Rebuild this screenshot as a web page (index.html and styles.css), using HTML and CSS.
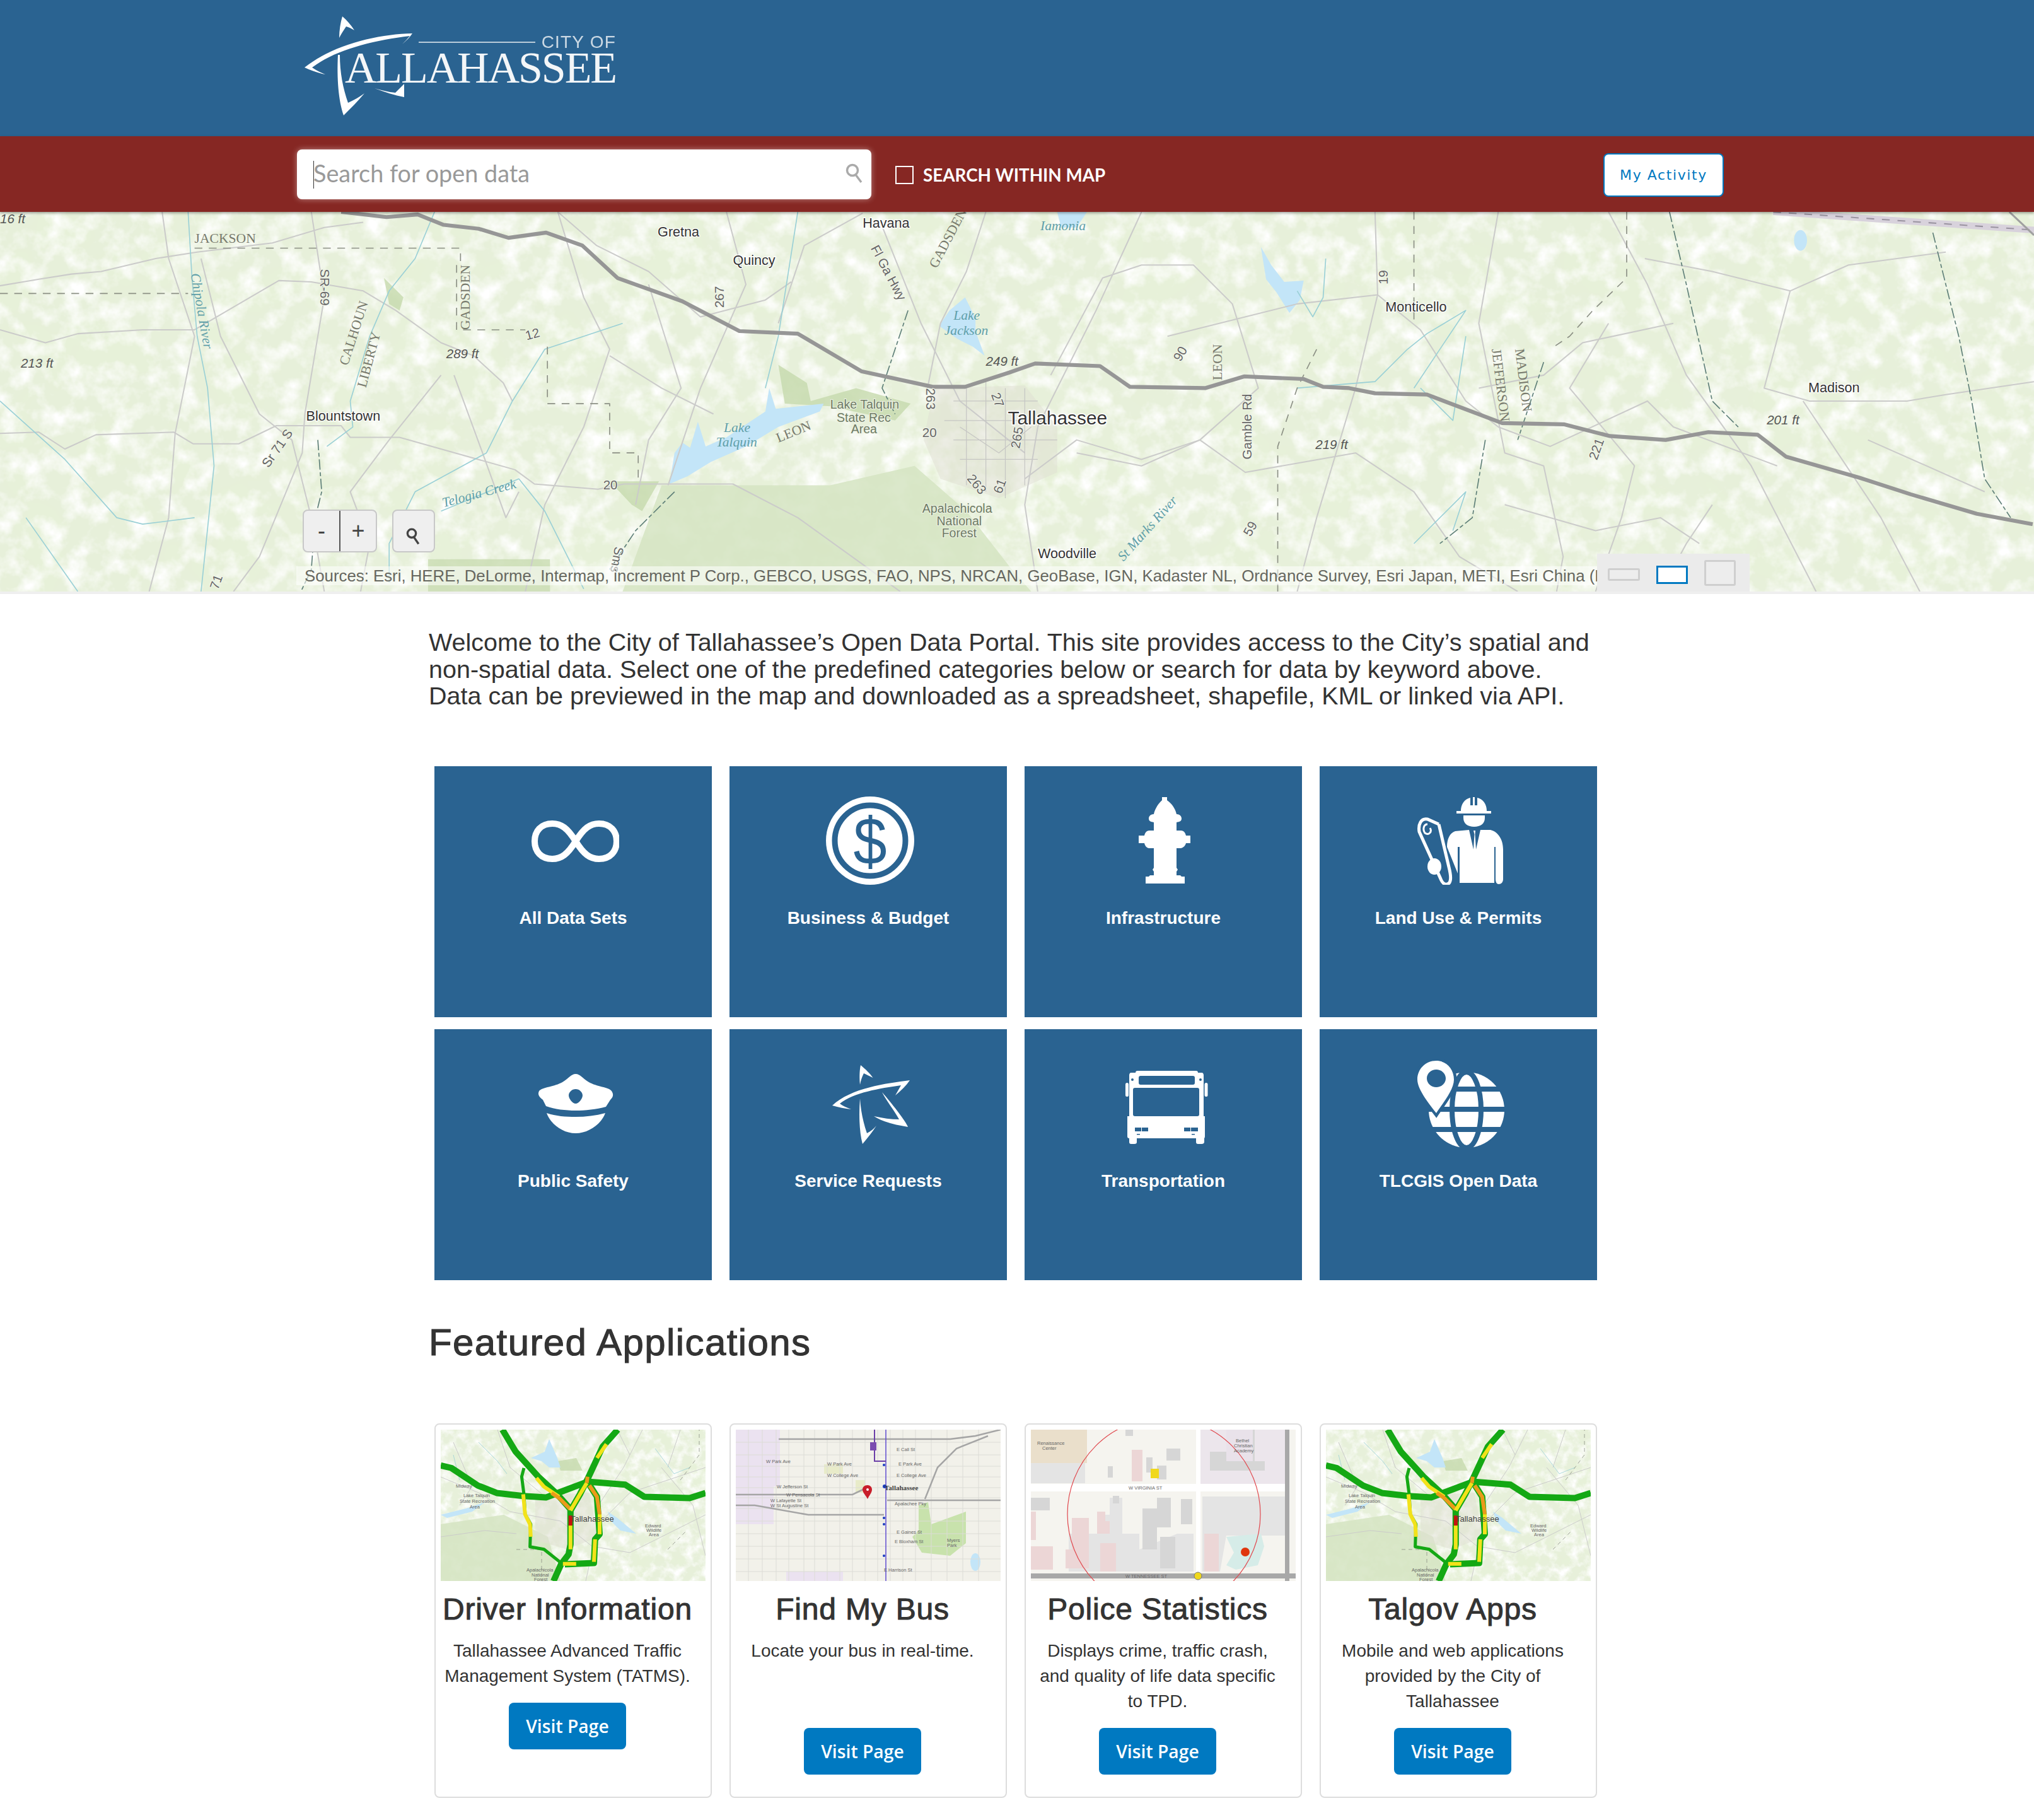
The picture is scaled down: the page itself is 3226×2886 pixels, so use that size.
FILE: index.html
```html
<!DOCTYPE html>
<html>
  <head>
    <title>City of Tallahassee Open Data Portal</title>
    <link rel="stylesheet" href="styles.css">
  </head>
  <body>
    <svg class="svg-defs" width="0" height="0">
      <defs>
        <filter id="blotchWhite" x="0" y="0" width="100%" height="100%">
          <feTurbulence type="fractalNoise" baseFrequency="0.06" numOctaves="4" seed="7"/>
          <feColorMatrix values="0 0 0 0 1  0 0 0 0 1  0 0 0 0 1  2.500 0 0 0 -1.050"/>
        </filter>
        <filter id="blotchGreen" x="0" y="0" width="100%" height="100%">
          <feTurbulence type="fractalNoise" baseFrequency="0.02" numOctaves="3" seed="21"/>
          <feColorMatrix values="0 0 0 0 0.8  0 0 0 0 0.88  0 0 0 0 0.69  0 2.6 0 0 -1.05"/>
        </filter>
        <symbol id="star" viewBox="0 0 140 140">
          <path d="M55,9C62,15 70,22 74.5,29C69,26 64,24 60,22C57,28 55,34 54,40C53,30 53,18 55,9Z"/>
          <path d="M133,33C95,38 40,45 10,73C20,76 30,78 40,79C33,76 27,74 22,70C45,52 85,46 119,41C116,46 113,52 110,57C119,49 127,42 133,33Z"/>
          <path d="M54,62C52,90 53,115 58,134C66,124 74,115 80,105C76,110 71,114 65,117C59,100 55,80 54,62Z"/>
          <path d="M89,52C98,62 125,95 130,107C112,104 92,100 76,90C90,93 103,95 116,95C108,80 96,66 89,52Z"/>
        </symbol>
        <symbol id="trafficMap" viewBox="0 0 420 240">
          <rect class="m-base" width="420" height="240"/>
          <rect width="420" height="240" filter="url(#blotchGreen)"/>
          <rect width="420" height="240" filter="url(#blotchWhite)"/>
          <path class="m-forest" d="M0,150L100,135L170,170L190,240H0Z"/>
          <path class="m-urban" d="M150,105L235,100L250,170L200,190L150,175Z"/>
          <path class="m-park" d="M185,50L215,45L225,65L190,65Z"/>
          <path class="m-water" d="M143,45L165,35L172,15L185,45L190,60L172,60L160,50Z"/>
          <path class="m-water" d="M0,135L40,125L70,115L50,130L10,140Z"/>
          <path class="m-water" d="M265,130L280,140L310,165L285,160L270,145Z"/>
          <path class="m-road" d="M20,20L50,90L30,120M90,0L110,60L170,110M0,75L60,100L110,130L190,145L240,185L300,195L420,135M320,0L290,60L250,120M230,240L250,150L300,100L420,60M350,60L400,120L420,200M0,170L70,160L120,165M380,0L360,60M280,0L300,40"/>
          <path class="m-river" d="M60,20L90,50L105,70M340,30L370,70L395,60M20,40L30,80"/>
          <path class="m-county" d="M380,80L410,40V0M120,190H160V240M360,190L390,160"/>
          <g class="t-road" transform="translate(-19.2,-24.6) scale(.6,.397)">
            <path class="t-green" d="M195,62L230,150L290,250L340,320L375,380V520L370,560L350,600L330,667"/>
            <path class="t-green" d="M32,205L60,215L130,285L180,315L250,327L310,333L350,310L420,270L520,282L570,330L690,335L732,315"/>
            <path class="t-green" d="M500,62L460,130L420,260L400,320L375,385"/>
            <path class="t-green" d="M420,270L445,330L452,480L440,500L437,595L360,600"/>
            <path class="t-green-thin" d="M252,215L246,250L252,320L255,400L270,440L268,530L305,540L355,600"/>
            <path class="t-yellow" d="M250,320L255,400L268,440L270,490"/>
            <path class="t-yellow" d="M285,255L305,290L345,330"/>
            <path class="t-orange" d="M325,315L345,335L375,380"/>
            <path class="t-yellow" d="M470,120L445,175"/>
            <path class="t-yellow" d="M418,275L400,320L375,385"/>
            <path class="t-orange" d="M420,250L418,275"/>
            <path class="t-orange" d="M425,285L445,330L452,400"/>
            <path class="t-yellow" d="M452,400L452,480"/>
            <path class="t-yellow" d="M375,445V540"/>
            <path class="t-red" d="M375,405V445"/>
            <path class="t-yellow" d="M355,598H390"/>
            <path class="t-yellow" d="M440,500L437,590"/>
          </g>
          <text class="t-town" x="206" y="146">Tallahassee</text>
          <text class="t-tiny" x="24" y="92">Midway</text>
          <text class="t-tiny" x="36" y="107">Lake Talquin</text>
          <text class="t-tiny" x="30" y="116">State Recreation</text>
          <text class="t-tiny" x="46" y="125">Area</text>
          <text class="t-tiny" x="136" y="225">Apalachicola</text>
          <text class="t-tiny" x="144" y="233">National</text>
          <text class="t-tiny" x="148" y="240">Forest</text>
          <text class="t-tiny" x="324" y="155">Edward</text>
          <text class="t-tiny" x="326" y="162">Wildlife</text>
          <text class="t-tiny" x="330" y="169">Area</text>
        </symbol>
      </defs>
    </svg>

    <header class="top-bar">
      <div class="logo">
        <div class="logo-city"><span class="logo-rule"></span>CITY OF</div>
        <div class="logo-name">ALLAHASSEE</div>
        <svg class="logo-star" viewBox="480 20 190 170">
          <path d="M543,26C550,32 557,40 562,48C557,45 553,43 549,42C545,48 541,54 538,60C538,48 540,36 543,26Z"/>
          <path d="M654,53C600,54 530,70 483,107C494,112 505,116 516,118C508,115 501,111 495,107C530,80 590,64 650,57C646,62 642,66 638,70C644,65 650,59 654,53Z"/>
          <path d="M536,87C534,125 537,160 545,183C556,172 568,160 578,148C570,154 561,159 552,163C544,140 539,115 539,87Z"/>
          <path d="M594,140C610,146 626,151 641,154V133L627,147C616,146 605,143 594,140Z"/>
        </svg>
      </div>
    </header>

    <div class="search-bar">
      <div class="search-box">
        <span class="caret"></span>
        <input class="search-input" placeholder="Search for open data">
        <svg class="search-icon" viewBox="0 0 30 32"><circle cx="12" cy="11" r="8.5"/><path d="M17,18L26,30"/></svg>
      </div>
      <label class="within-map"><span class="check"></span>SEARCH WITHIN MAP</label>
      <button class="activity-btn">My Activity</button>
    </div>

    <section class="map">
      <svg class="map-canvas" viewBox="0 164 1568 293" preserveAspectRatio="none">
        <rect class="m-base" y="164" width="1568" height="293"/>
        <rect y="164" width="1568" height="293" filter="url(#blotchGreen)"/>
        <rect y="164" width="1568" height="293" filter="url(#blotchWhite)"/>
        <path class="m-forest" d="M510,375L640,375L705,360L745,395L780,440L795,457H480Z"/>
        <path class="m-forest-dark" d="M330,432H424V457H330Z"/>
        <path class="m-park" d="M600,282L622,296L625,310L660,300L702,312L690,325L640,314L605,312Z"/>
        <path class="m-park" d="M470,372H508L495,395L487,390Z"/>
        <path class="m-park" d="M296,215L311,230L308,240L300,235Z"/>
        <path class="m-urban" d="M720,300L790,298L815,330L815,365L770,385L725,370L712,340Z"/>
        <path class="m-purple" d="M1367,164L1568,178"/>
        <path class="m-purple-dash" d="M1367,164L1568,178"/>

        <path class="m-water" d="M744,230L752,246L752,256L759,275L750,268L738,262L724,252L732,240Z"/>
        <path class="m-water" d="M972,191L980,205L990,218L1005,217L1002,232L994,242L984,226L976,216Z"/>
        <path class="m-water" d="M516,374L520,350L526,342L532,346L538,326L544,345L560,338L590,318L593,300L598,316L635,312L632,318L600,330L575,345L548,357L530,368Z"/>
        <ellipse class="m-water" cx="1388" cy="186" rx="5" ry="8"/>
        <path class="m-water" d="M815,164H838L830,176H818Z"/>

        <path class="m-road" d="M0,335L30,334L50,347L74,336L134,334L149,343L184,343L213,329L263,329L270,338L308,338L397,363L412,374L461,378L481,374L565,374L615,400L665,436L694,457"/>
        <path class="m-road" d="M0,221L30,216L55,212L78,210L120,200L152,195L210,188L250,176L280,172"/>
        <path class="m-road" d="M0,255L35,265L60,258L110,255L150,255L215,217L240,218L280,225L305,240L340,265L365,275L388,296L395,310"/>
        <path class="m-road" d="M125,164L130,200L150,260L135,335L130,400L115,457"/>
        <path class="m-road" d="M155,200L170,260L200,320L225,340L240,400L250,457"/>
        <path class="m-road" d="M240,164L250,230L235,320L233,350L200,430L180,457"/>
        <path class="m-road" d="M340,290L300,340L270,380L285,420L278,457"/>
        <path class="m-road" d="M350,290L372,350L390,400L400,380"/>
        <path class="m-road" d="M430,164L460,190L500,210L540,245L590,232L610,218"/>
        <path class="m-road" d="M430,164L450,230L470,270L450,330L420,390L405,457"/>
        <path class="m-road" d="M500,220L525,300L500,340L490,390"/>
        <path class="m-road" d="M560,164L575,220L540,300L515,375"/>
        <path class="m-road" d="M470,275L510,300L550,320"/>
        <path class="m-road" d="M680,175L710,250L740,310L790,350"/>
        <path class="m-road" d="M600,250L620,190L665,165"/>
        <path class="m-road" d="M760,164L745,210L725,250L715,300"/>
        <path class="m-road" d="M880,164L845,240L800,330L790,390L800,457"/>
        <path class="m-road" d="M810,290L850,215L880,205L920,205L950,235L970,300L925,340L880,360L830,350"/>
        <path class="m-road" d="M790,370L830,340L880,355L925,340L960,365L1045,350L1090,380L1125,430L1170,457"/>
        <path class="m-road" d="M900,260L1000,235L1062,228L1095,255L1130,310L1155,330L1195,345L1270,310L1290,330L1370,360"/>
        <path class="m-road" d="M1060,164L1062,228L1045,300L1015,400L1000,457"/>
        <path class="m-road" d="M1155,164L1140,250L1150,300L1160,350L1190,360L1205,430L1200,457"/>
        <path class="m-road" d="M1240,250L1210,300L1260,360L1250,400L1230,457"/>
        <path class="m-road" d="M1240,164L1270,220L1300,290L1350,360L1400,457"/>
        <path class="m-road" d="M1268,200L1320,210L1380,225L1425,205L1500,195"/>
        <path class="m-road" d="M1380,225L1360,300L1395,310L1470,310L1500,305L1568,295"/>
        <path class="m-road" d="M1390,310L1450,400L1480,457"/>
        <path class="m-road" d="M1440,340L1530,380"/>
        <path class="m-road" d="M1160,390L1230,410L1280,400L1310,420"/>
        <path class="m-road" d="M1320,390L1300,420L1280,457"/>
        <path class="m-road" d="M1140,300L1190,290L1220,265L1290,250"/>

        <path class="m-urban-road" d="M735,310H800M728,325H810M735,340H815M740,355H800M745,300V375M760,295V380M775,300V385M790,300V375M740,330L770,350L795,330"/>

        <path class="m-river" d="M145,164L148,215L152,260L160,300L165,360L155,457"/>
        <path class="m-river" d="M0,310L50,355L90,400L110,405L150,400"/>
        <path class="m-river" d="M20,400L60,457"/>
        <path class="m-river" d="M335,164L320,200L300,225L285,260L270,310L272,330L252,345"/>
        <path class="m-river" d="M480,250L420,270L395,310L375,350L320,380L300,420L300,450"/>
        <path class="m-river" d="M340,395L400,370L420,395L450,455"/>
        <path class="m-river" d="M615,164L600,260L590,300"/>
        <path class="m-river" d="M1000,225L1012,245L1020,230L1022,200"/>
        <path class="m-river" d="M1000,300L1060,295L1085,270L1100,258L1130,240L1090,300"/>
        <path class="m-river" d="M1095,300L1120,325L1130,260"/>
        <path class="m-river" d="M1090,420L1130,380L1120,410"/>
        <path class="m-dark-river" d="M245,340L248,380L243,400L240,440L232,457"/>
        <path class="m-dark-river" d="M520,380L490,410L470,440"/>
        <path class="m-dark-river" d="M700,240L690,270L680,300L690,320"/>
        <path class="m-dark-river" d="M1287,164L1300,220L1320,310L1340,330"/>
        <path class="m-dark-river" d="M1490,180L1510,260L1520,310L1530,370L1550,400"/>
        <path class="m-dark-river" d="M1145,340L1135,400L1110,420"/>
        <path class="m-dark-river" d="M1190,280L1170,340"/>

        <path class="m-county" d="M150,192H355V205M0,227H145M352,205V255H405M422,268V312H470V350H492V372"/>
        <path class="m-county" d="M1090,164V207L1090,250M1254,164V215L1228,240L1210,260L1195,270M1015,270L1000,300L985,345V457"/>

        <path class="m-i10" d="M263,164L298,168L322,166L342,174L369,177L392,184L421,180L449,190L476,215L526,233L570,256L615,258L664,287L719,299L744,299L778,288L798,281L848,283L871,299L929,300L959,291L1005,293L1020,299L1040,300L1060,304L1100,305L1158,327L1206,328L1241,337L1284,340L1317,334L1355,336L1377,353L1433,369L1473,382L1524,397L1567,405"/>
        <path class="m-i10-thin" d="M1549,164L1568,182"/>

        <text class="l-town" x="507" y="183">Gretna</text>
        <text class="l-town" x="665" y="176">Havana</text>
        <text class="l-town" x="565" y="205">Quincy</text>
        <text class="l-town" x="1068" y="241">Monticello</text>
        <text class="l-town" x="1394" y="303">Madison</text>
        <text class="l-town" x="236" y="325">Blountstown</text>
        <text class="l-town" x="800" y="431">Woodville</text>
        <text class="l-city" x="777" y="328">Tallahassee</text>
        <text class="l-height" x="0" y="173">16 ft</text>
        <text class="l-height" x="16" y="284">213 ft</text>
        <text class="l-height" x="344" y="277">289 ft</text>
        <text class="l-height" x="760" y="283">249 ft</text>
        <text class="l-height" x="1014" y="347">219 ft</text>
        <text class="l-height" x="1362" y="328">201 ft</text>
        <text class="l-lake" x="735" y="247">Lake</text>
        <text class="l-lake" x="728" y="259">Jackson</text>
        <text class="l-lake" x="802" y="178">Iamonia</text>
        <text class="l-lake" x="558" y="334">Lake</text>
        <text class="l-lake" x="552" y="345">Talquin</text>
        <text class="l-lake" transform="rotate(-15 342 392)" x="342" y="392">Telogia Creek</text>
        <text class="l-lake" transform="rotate(-48 866 434)" x="866" y="434">St Marks River</text>
        <text class="l-lake" transform="rotate(80 147 212)" x="147" y="212">Chipola River</text>
        <text class="l-area" x="640" y="316">Lake Talquin</text>
        <text class="l-area" x="645" y="326">State Rec</text>
        <text class="l-area" x="656" y="335">Area</text>
        <text class="l-area" x="711" y="396">Apalachicola</text>
        <text class="l-area" x="722" y="406">National</text>
        <text class="l-area" x="726" y="415">Forest</text>
        <text class="l-county" x="150" y="188">JACKSON</text>
        <text class="l-county" transform="rotate(-90 362 255)" x="362" y="255">GADSDEN</text>
        <text class="l-county" transform="rotate(-72 268 283)" x="268" y="283">CALHOUN</text>
        <text class="l-county" transform="rotate(-75 282 300)" x="282" y="300">LIBERTY</text>
        <text class="l-county" transform="rotate(-62 722 208)" x="722" y="208">GADSDEN</text>
        <text class="l-county" transform="rotate(-90 942 294)" x="942" y="294">LEON</text>
        <text class="l-county" transform="rotate(-22 600 342)" x="600" y="342">LEON</text>
        <text class="l-county" transform="rotate(83 1150 270)" x="1150" y="270">JEFFERSON</text>
        <text class="l-county" transform="rotate(83 1168 270)" x="1168" y="270">MADISON</text>
        <text class="l-road-name" transform="rotate(90 247 208)" x="247" y="208">SR-69</text>
        <text class="l-road-name" transform="rotate(-90 558 238)" x="558" y="238">267</text>
        <text class="l-road-name" transform="rotate(-55 207 362)" x="207" y="362">Sr 71 S</text>
        <text class="l-road-name" transform="rotate(62 671 192)" x="671" y="192">Fl Ga Hwy</text>
        <text class="l-road-name" transform="rotate(-90 965 355)" x="965" y="355">Gamble Rd</text>
        <text class="l-road-name" transform="rotate(-15 406 263)" x="406" y="263">12</text>
        <text class="l-road-name" x="465" y="378">20</text>
        <text class="l-road-name" x="711" y="338">20</text>
        <text class="l-road-name" transform="rotate(90 714 300)" x="714" y="300">263</text>
        <text class="l-road-name" transform="rotate(70 764 305)" x="764" y="305">27</text>
        <text class="l-road-name" transform="rotate(-60 910 280)" x="910" y="280">90</text>
        <text class="l-road-name" transform="rotate(-80 786 347)" x="786" y="347">265</text>
        <text class="l-road-name" transform="rotate(50 745 370)" x="745" y="370">263</text>
        <text class="l-road-name" transform="rotate(-70 772 382)" x="772" y="382">61</text>
        <text class="l-road-name" transform="rotate(-90 1070 220)" x="1070" y="220">19</text>
        <text class="l-road-name" transform="rotate(-70 1231 356)" x="1231" y="356">221</text>
        <text class="l-road-name" transform="rotate(-60 964 415)" x="964" y="415">59</text>
        <text class="l-road-name" transform="rotate(-70 168 456)" x="168" y="456">71</text>
        <text class="l-road-name" transform="rotate(100 474 422)" x="474" y="422">Sms</text>
      </svg>

      <div class="zoom-ctrl">
        <button class="zoom-btn">-</button>
        <button class="zoom-btn">+</button>
      </div>
      <button class="map-search">
        <svg viewBox="0 0 30 36"><circle cx="12" cy="13" r="8"/><path d="M16,20L25,33"/></svg>
      </button>
      <div class="attribution">Sources: Esri, HERE, DeLorme, Intermap, increment P Corp., GEBCO, USGS, FAO, NPS, NRCAN, GeoBase, IGN, Kadaster NL, Ordnance Survey, Esri Japan, METI, Esri China (Hong Kong), Esri Korea, Esri</div>
      <div class="map-sizes">
        <span class="size size-wide"></span>
        <span class="size size-mid"></span>
        <span class="size size-tall"></span>
      </div>
    </section>

    <main class="content">
      <p class="intro">Welcome to the City of Tallahassee’s Open Data Portal. This site provides access to the City’s spatial and<br>non-spatial data. Select one of the predefined categories below or search for data by keyword above.<br>Data can be previewed in the map and downloaded as a spreadsheet, shapefile, KML or linked via API.</p>

      <div class="tiles">
        <a class="tile">
          <svg class="tile-icon" viewBox="0 0 140 140"><path class="ico-line" d="M71,71C58,50 48,43 34,43C16,43 6,55 6,71C6,87 16,99 34,99C48,99 58,92 71,71C84,50 94,43 108,43C126,43 136,55 136,71C136,87 126,99 108,99C94,99 84,92 71,71Z"/></svg>
          <span class="tile-label">All Data Sets</span>
        </a>
        <a class="tile">
          <svg class="tile-icon" viewBox="0 0 140 140">
            <circle class="ico" cx="70" cy="70" r="70"/>
            <circle class="ico-ring" cx="70" cy="70" r="56"/>
            <text class="ico-dollar" transform="translate(70 108) scale(.9 1)">$</text>
          </svg>
          <span class="tile-label">Business &amp; Budget</span>
        </a>
        <a class="tile">
          <svg class="tile-icon" viewBox="0 0 140 140"><path class="ico" d="M65,1H73V6C82,12 87,22 88,28C94,28 96,32 96,35C96,39 93,40 88,41V54H95C100,54 102,58 103,62H110V74H103C102,78 99,81 95,82H88V113L90,116L88,119V125H94L96,127H101V138H39V127H44L46,125H52V119L50,116L52,113V82H44C40,81 38,78 37,74H28V62H37C38,58 40,54 45,54H52V41C47,40 44,39 44,35C44,32 46,28 52,28C53,22 58,12 65,6Z"/></svg>
          <span class="tile-label">Infrastructure</span>
        </a>
        <a class="tile">
          <svg class="tile-icon" viewBox="0 0 140 140">
            <path class="ico" d="M64,27H119V23H112C112,12 106,4 97,2V14H93V1H90V14H86V2C77,4 71,12 71,23H64Z"/>
            <path class="ico" d="M75,30H109V34C109,43 102,48 92,48C82,48 75,43 75,34Z"/>
            <path class="ico" d="M62,55L84,53L91,84L92.500,60L91,54H94L93.500,60L95,84L102,53L118,53C130,56 138,68 138,84V131C138,136 135,139 131,139C128,139 126,136 126,131V80H124V137H69V80H66V122L49,80C49,68 53,58 62,55Z"/>
            <path class="ico-scroll" d="M36,44L18,36C8,34 3,44 5,56L40,133C44,141 52,141 54,134C56,128 54,120 52,112L36,44"/>
            <path class="ico-scroll-thin" d="M18,44C12,44 10,52 14,58C20,62 26,56 22,50"/>
            <ellipse class="ico" cx="29" cy="111" rx="11" ry="13"/>
          </svg>
          <span class="tile-label">Land Use &amp; Permits</span>
        </a>
        <a class="tile">
          <svg class="tile-icon" viewBox="0 0 140 140">
            <path class="ico ico-odd" d="M71,23C78,23 82,30 92,36C104,43 124,44 128,50C132,56 130,60 126,64L119,75C104,79 86,81 71,81C55,81 38,79 24,74L19,64C14,60 10,56 13,50C18,44 38,43 50,36C60,30 64,23 71,23ZM71,47C65,47 60,52 60,57C60,62 66,70 71,70C76,70 82,62 82,57C82,52 77,47 71,47Z"/>
            <path class="ico" d="M25,85C40,90 55,91 71,91C87,91 103,89 118,85C112,102 92,117 71,117C50,117 31,102 25,85Z"/>
          </svg>
          <span class="tile-label">Public Safety</span>
        </a>
        <a class="tile">
          <svg class="tile-icon ico"><use href="#star"/></svg>
          <span class="tile-label">Service Requests</span>
        </a>
        <a class="tile">
          <svg class="tile-icon" viewBox="0 0 140 140">
            <path class="ico" d="M26,18H119C121,18 122,19 122,21H128C130,21 131,23 131,25V90H133V122C133,124 132,125 132,125V131C132,133 130,134 128,134H122C120,134 119,133 119,131V125H25V131C25,133 24,134 21,134H16C14,134 13,133 13,131V125C11,125 10,124 10,122V90H13V25C13,23 14,21 16,21H23C23,19 24,18 26,18Z"/>
            <rect class="ico" x="7" y="37" width="5" height="22" rx="2.500"/>
            <rect class="ico" x="132.500" y="37" width="5" height="22" rx="2.500"/>
            <rect class="ico-cut" x="28" y="26" width="89" height="14" rx="3"/>
            <rect class="ico-cut" x="19" y="45" width="105" height="45" rx="3"/>
            <rect class="ico-cut" x="22" y="108" width="10" height="6"/><rect class="ico-cut" x="33" y="108" width="10" height="6"/>
            <rect class="ico-cut" x="100" y="108" width="10" height="6"/><rect class="ico-cut" x="111" y="108" width="11" height="6"/>
            <rect class="ico-cut" x="25" y="118" width="5" height="1.500"/><rect class="ico-cut" x="112" y="118" width="5" height="1.500"/>
            <circle class="ico-cut" cx="18" cy="32" r="2"/><circle class="ico-cut" cx="126" cy="32" r="2"/>
          </svg>
          <span class="tile-label">Transportation</span>
        </a>
        <a class="tile">
          <svg class="tile-icon" viewBox="0 0 140 140">
            <circle class="ico" cx="80" cy="80" r="60"/>
            <ellipse class="ico-cut-line" cx="80" cy="80" rx="23" ry="60"/>
            <path class="ico-cut-line" d="M20,47H140M16,79H144M20,111H140"/>
            <path class="ico-pin-edge" d="M32,2C15,2 2,15 2,32C2,48 22,72 32,85C42,70 60,48 60,32C60,15 48,2 32,2Z"/>
            <path class="ico ico-odd" d="M32,2C15,2 2,15 2,32C2,48 22,72 32,85C42,70 60,48 60,32C60,15 48,2 32,2ZM32,16C24,16 17,22 17,30C17,38 24,44 32,44C40,44 47,38 47,30C47,22 40,16 32,16Z"/>
          </svg>
          <span class="tile-label">TLCGIS Open Data</span>
        </a>
      </div>

      <h2 class="section-title">Featured Applications</h2>

      <div class="cards">
        <div class="card">
          <svg class="thumb" viewBox="0 0 420 240"><use href="#trafficMap"/></svg>
          <div class="caption">
            <h3 class="card-title">Driver Information</h3>
            <p class="card-text card-text-short">Tallahassee Advanced Traffic Management System (TATMS).</p>
            <a class="visit-btn">Visit Page</a>
          </div>
        </div>
        <div class="card">
          <svg class="thumb" viewBox="0 0 420 240">
            <rect class="bus-base" width="420" height="240"/>
            <path class="bus-purple" d="M0,0H70V90H60V150H0ZM80,225H170V240H80Z"/>
            <path class="bus-tint" d="M140,55H170V70H140ZM190,80H205V100H190Z"/>
            <path class="bus-green" d="M290,120L305,115L310,150L365,130L365,180L340,200L295,195L280,170L290,160Z"/>
            <ellipse class="m-water" cx="380" cy="210" rx="8" ry="14"/>
            <g class="bus-streets">
              <path d="M0,20H420M0,40H420M0,58H420M0,75H420M0,92H420M0,108H420M0,125H420M0,145H420M0,165H420M0,185H420M0,205H420M0,225H420"/>
              <path d="M20,0V240M42,0V240M64,0V240M84,0V240M108,0V240M125,0V240M145,0V240M165,0V240M185,0V240M205,0V240M225,0V240M245,0V240M265,0V240M285,0V240M310,0V240M335,0V240M360,0V240M385,0V240"/>
            </g>
            <path class="bus-road" d="M0,103H125M130,103H185L212,90M0,120H30L115,135H235M240,112H420"/>
            <path class="bus-road" d="M68,15H340L380,10L420,0M300,110L320,60L350,30L400,10"/>
            <path class="bus-route" d="M238,0V240"/>
            <path class="bus-route-2" d="M220,0V50H238"/>
            <circle class="bus-stop" cx="235" cy="56" r="2"/><circle class="bus-stop" cx="235" cy="140" r="2"/><circle class="bus-stop" cx="235" cy="150" r="2"/><circle class="bus-stop" cx="235" cy="200" r="2"/><circle class="bus-stop" cx="236" cy="90" r="3"/>
            <rect class="bus-flag" x="213" y="20" width="10" height="13"/>
            <path class="bus-pin" d="M209,88C204,88 201,91 201,95C201,100 207,105 209,110C211,105 216,100 216,95C216,91 213,88 209,88Z"/>
            <circle class="bus-pin-dot" cx="209" cy="95" r="2"/>
            <text class="bus-town" x="236" y="96">Tallahassee</text>
            <text class="t-tiny" x="48" y="53">W Park Ave</text>
            <text class="t-tiny" x="145" y="57">W Park Ave</text>
            <text class="t-tiny" x="255" y="34">E Call St</text>
            <text class="t-tiny" x="258" y="57">E Park Ave</text>
            <text class="t-tiny" x="255" y="75">E College Ave</text>
            <text class="t-tiny" x="145" y="75">W College Ave</text>
            <text class="t-tiny" x="65" y="93">W Jefferson St</text>
            <text class="t-tiny" x="80" y="106">W Pensacola St</text>
            <text class="t-tiny" x="55" y="115">W Lafayette St</text>
            <text class="t-tiny" x="55" y="123">W St Augustine St</text>
            <text class="t-tiny" x="252" y="120">Apalachee Pky</text>
            <text class="t-tiny" x="255" y="165">E Gaines St</text>
            <text class="t-tiny" x="252" y="180">E Bloxham St</text>
            <text class="t-tiny" x="335" y="178">Myers</text>
            <text class="t-tiny" x="335" y="186">Park</text>
            <text class="t-tiny" x="235" y="225">E Harrison St</text>
          </svg>
          <div class="caption">
            <h3 class="card-title">Find My Bus</h3>
            <p class="card-text">Locate your bus in real-time.</p>
            <a class="visit-btn">Visit Page</a>
          </div>
        </div>
        <div class="card">
          <svg class="thumb" viewBox="0 0 420 240">
            <rect class="pol-base" width="420" height="240"/>
            <path class="pol-tan" d="M0,0H89V53H0Z"/>
            <rect class="pol-grey" y="53" width="86" height="32"/>
            <rect class="pol-lilac" x="268" width="135" height="86"/>
            <path class="pol-grey-dark" d="M284,35H310V0H355V50H371V65H284Z"/>
            <path class="pol-lilac-2" d="M310,0H352V50H310Z"/>
            <rect class="pol-white-road" y="86" width="403" height="12"/>
            <rect class="pol-white-road" x="262" width="7" height="228"/>
            <rect class="pol-pink" x="160" y="32" width="17" height="50"/>
            <rect class="pol-grey-dark" x="183" y="44" width="10" height="24"/>
            <rect class="pol-grey-dark" x="215" y="30" width="22" height="19"/>
            <rect class="pol-grey-dark" x="200" y="57" width="15" height="22"/>
            <rect class="pol-grey-dark" x="122" y="58" width="8" height="18"/>
            <rect class="pol-grey-dark" x="150" y="0" width="12" height="10"/>
            <path class="pol-grey" d="M60,165H112V135H125V108H145V165H172V190L232,165H258V225H60Z"/>
            <path class="pol-grey" d="M272,106H403V168H310L300,225H272Z"/>
            <path class="pol-grey-dark" d="M177,125H200V108H222V155H200V190H177Z"/>
            <rect class="pol-grey-dark" x="205" y="170" width="24" height="50"/>
            <rect class="pol-grey-dark" x="130" y="105" width="10" height="12"/>
            <rect class="pol-grey-dark" x="238" y="110" width="18" height="40"/>
            <rect class="pol-grey-dark" x="0" y="108" width="30" height="20"/>
            <path class="pol-pink" d="M0,185H35V222H0ZM0,130H8V175H0ZM65,140H92V220H65ZM110,180H135V225H110ZM55,190H67V220H55ZM275,165H298V225H275Z"/>
            <path class="pol-pink" d="M105,130H118V145H125V165H105Z"/>
            <path class="pol-teal" d="M310,170L365,165L370,185L360,215L325,222L310,215L322,195Z"/>
            <rect class="pol-road" y="228" width="420" height="8"/>
            <rect class="pol-road" x="403" width="7" height="240"/>
            <rect class="pol-mark" x="190" y="62" width="13" height="15"/>
            <circle class="pol-dot" cx="340" cy="194" r="7"/>
            <circle class="pol-sign" cx="265" cy="232" r="6"/>
            <circle class="pol-ring" cx="211" cy="134" r="153"/>
            <text class="t-tiny" x="10" y="24">Renaissance</text>
            <text class="t-tiny" x="18" y="32">Center</text>
            <text class="t-tiny" x="325" y="20">Bethel</text>
            <text class="t-tiny" x="322" y="28">Christian</text>
            <text class="t-tiny" x="322" y="36">Academy</text>
            <text class="t-tiny" x="155" y="95">W VIRGINIA ST</text>
            <text class="t-tiny" x="150" y="235">W TENNESSEE ST</text>
          </svg>
          <div class="caption">
            <h3 class="card-title">Police Statistics</h3>
            <p class="card-text">Displays crime, traffic crash, and quality of life data specific to TPD.</p>
            <a class="visit-btn">Visit Page</a>
          </div>
        </div>
        <div class="card">
          <svg class="thumb" viewBox="0 0 420 240"><use href="#trafficMap"/></svg>
          <div class="caption">
            <h3 class="card-title">Talgov Apps</h3>
            <p class="card-text">Mobile and web applications provided by the City of Tallahassee</p>
            <a class="visit-btn">Visit Page</a>
          </div>
        </div>
      </div>
    </main>
  </body>
</html>
```
FILE: styles.css
```css
body { margin: 0; background: #fff; color: #333; font-family: "Liberation Sans", Arial, sans-serif; }
.svg-defs { position: absolute; }

/* header */
.top-bar { height: 216px; background: #2a6391; padding-left: 480px; box-sizing: border-box; }
.logo { position: relative; width: 497px; height: 216px; box-sizing: border-box; padding-top: 50px; color: #f3f6f8; text-align: right; font-family: "Liberation Serif", serif; }
.logo-city { display: flex; align-items: center; justify-content: flex-end; font-family: "Liberation Sans", sans-serif; font-size: 28px; line-height: 33px; letter-spacing: 1.200px; opacity: .8; }
.logo-rule { width: 185px; height: 2px; background: #dfe6ec; margin-right: 10px; }
.logo-name { font-size: 70px; line-height: 50px; letter-spacing: -2.100px; }
.logo-star { position: absolute; left: 0; top: 20px; width: 190px; height: 170px; fill: #fff; }

.search-bar { display: flex; align-items: center; height: 120px; background: #862723; padding: 0 492px 0 471px; position: relative; z-index: 2; box-shadow: 0 2px 4px rgba(0,0,0,.35); }
.search-box { display: flex; align-items: center; position: relative; width: 911px; height: 79px; background: #fff; border-radius: 8px; box-sizing: border-box; padding: 0 0 3px 26px; box-shadow: 0 0 10px rgba(255,255,255,.45); }
.caret { position: absolute; left: 26px; top: 18px; width: 1px; height: 44px; background: #333; }
.search-input { border: none; outline: none; flex-grow: 1; font-family: Lato, sans-serif; font-size: 37.800px; padding: 0; color: #333; }
.search-input::placeholder { color: #999; opacity: 1; }
.search-icon { width: 30px; height: 32px; margin-right: 12px; fill: none; stroke: #aaa; stroke-width: 3.500; }
.within-map { display: flex; align-items: center; margin: 2px 0 0 38px; color: #fff; font-family: Lato, sans-serif; font-weight: 700; font-size: 27.800px; }
.check { width: 25px; height: 25px; border: 2px solid #fff; margin-right: 15px; }
.activity-btn { margin: 2px 0 0 auto; width: 191px; height: 69px; padding: 0; background: #fff; border: 2px solid #0079c1; border-radius: 8px; color: #0079c1; font-family: "DejaVu Sans", sans-serif; font-size: 22px; letter-spacing: 1.600px; }

/* map */
.map { position: relative; height: 602px; border-bottom: 4px solid #efefef; overflow: hidden; }
.map-canvas { display: block; width: 3226px; height: 602px; }
.m-base { fill: #e7f0da; }
.m-forest { fill: #d5e4c2; opacity: .85; }
.m-forest-dark { fill: #c9dcb2; opacity: .8; }
.m-park { fill: #c6d9ac; opacity: .8; }
.m-urban { fill: #e0e0d4; opacity: .55; }
.m-purple { fill: none; stroke: #d8d2dc; stroke-width: 5; }
.m-purple-dash { fill: none; stroke: #9a94a0; stroke-width: 1; stroke-dasharray: 6 6; }
.m-water { fill: #c3e5f8; }
.m-road, .m-urban-road, .m-river, .m-dark-river, .m-county, .m-i10, .m-i10-thin { fill: none; stroke-linejoin: round; }
.m-road { stroke: #cbcbca; stroke-width: 1; }
.m-urban-road { stroke: #c6c6c4; stroke-width: .6; }
.m-river { stroke: #9ad0d6; stroke-width: .8; }
.m-dark-river { stroke: #5e7f78; stroke-width: .8; stroke-dasharray: 8 2 3 2; }
.m-county { stroke: #8b8f84; stroke-width: .8; stroke-dasharray: 6 5; }
.m-i10 { stroke: #969696; stroke-width: 3; }
.m-i10-thin { stroke: #a0a0a0; stroke-width: 1.500; }
.map text { font-family: "Liberation Sans", sans-serif; }
.map .l-town { font-size: 10.500px; fill: #333; stroke: #fff; stroke-width: 1.200; paint-order: stroke; }
.map .l-city { font-size: 14.500px; fill: #333; stroke: #fff; stroke-width: 1.500; paint-order: stroke; }
.map .l-height { font-size: 10px; font-style: italic; fill: #555; }
.map .l-lake { font-family: "Liberation Serif", serif; font-size: 10.500px; font-style: italic; fill: #5f9fa9; }
.map .l-area { font-size: 9.500px; fill: #6d7a63; stroke: #eef3e6; stroke-width: 1; paint-order: stroke; }
.map .l-county { font-family: "Liberation Serif", serif; font-size: 10.500px; fill: #77796c; }
.map .l-road-name { font-size: 10px; fill: #666; stroke: #f3f6ec; stroke-width: 1; paint-order: stroke; }

.zoom-ctrl { position: absolute; left: 480px; top: 472px; display: flex; width: 118px; height: 68px; box-sizing: border-box; background: #efefef; border: 2px solid #c8c8c8; border-radius: 8px; overflow: hidden; }
.zoom-btn { flex: 1; padding: 0; border: none; background: none; color: #444; font-family: "Liberation Sans", sans-serif; font-size: 36px; }
.zoom-btn + .zoom-btn { border-left: 2px solid #555; }
.map-search { position: absolute; left: 622px; top: 472px; width: 68px; height: 68px; padding: 0; background: #efefef; border: 2px solid #c8c8c8; border-radius: 8px; }
.map-search svg { display: block; width: 25px; height: 30px; margin: 16px 0 0 19px; fill: none; stroke: #444; stroke-width: 4; }
.attribution { position: absolute; left: 470px; top: 562px; width: 2063px; height: 30px; box-sizing: border-box; padding-left: 13px; background: rgba(255,255,255,.55); color: #66675f; font-size: 25.800px; line-height: 30px; white-space: nowrap; overflow: hidden; }
.map-sizes { position: absolute; left: 2533px; top: 542px; width: 242px; height: 60px; display: flex; align-items: center; box-sizing: border-box; padding: 0 22px 0 17px; justify-content: space-between; background: #ebebeb; }
.size { box-sizing: border-box; display: block; background: #ededed; border: 3px solid #cfcfcf; border-radius: 3px; }
.size-wide { width: 51px; height: 20px; margin-top: 6px; }
.size-mid { width: 50px; height: 29px; background: #fff; border-color: #0079c1; border-radius: 0; margin-top: 6px; }
.size-tall { width: 50px; height: 41px; }

/* content */
.content { margin-left: 680px; width: 1870px; padding: 55px 0 37px; }
.intro { margin: 0 0 90px; font-size: 39.500px; line-height: 42.500px; white-space: nowrap; }

.tiles { display: grid; grid-template-columns: repeat(4, 440px); gap: 19px 28px; margin-left: 9px; }
.tile { display: flex; flex-direction: column; align-items: center; height: 398px; background: #2a6391; color: #fff; }
.tile-icon { display: block; width: 140px; height: 140px; margin: 48px 0 0 6px; flex-shrink: 0; }
.tile-label { margin-top: 38px; font-size: 28px; font-weight: 700; line-height: 30px; }
.ico { fill: #fff; }
.ico-odd { fill-rule: evenodd; }
.ico-cut { fill: #2a6391; }
.ico-line { fill: none; stroke: #fff; stroke-width: 10; }
.ico-ring { fill: none; stroke: #2a6391; stroke-width: 9; }
.ico-cut-line { fill: none; stroke: #2a6391; stroke-width: 8; }
.ico-pin-edge { fill: #2a6391; stroke: #2a6391; stroke-width: 9; }
.ico-scroll { fill: none; stroke: #fff; stroke-width: 5; }
.ico-scroll-thin { fill: none; stroke: #fff; stroke-width: 3; }
.ico-dollar { fill: #2a6391; font-family: "Liberation Sans", sans-serif; font-size: 106px; text-anchor: middle; }

.section-title { margin: 66px 0 0; font-size: 60px; line-height: 66px; font-weight: 400; letter-spacing: 1.400px; -webkit-text-stroke: 1.100px #333; }

.cards { display: grid; grid-template-columns: repeat(4, 440px); gap: 28px; margin: 95px 0 0 9px; }
.card { box-sizing: border-box; border: 2px solid #ddd; border-radius: 8px; padding: 8px 8px 35px; }
.thumb { display: block; width: 420px; height: 240px; }
.caption { width: 402px; text-align: center; }
.card-title { margin: 18px 0 20px; font-size: 48px; line-height: 53px; font-weight: 400; letter-spacing: .8px; -webkit-text-stroke: 1px #333; white-space: nowrap; }
.card-text { margin: 0 0 22px; min-height: 120px; font-size: 28px; line-height: 40px; }
.card-text-short { min-height: 80px; }
.visit-btn { display: block; width: 186px; height: 74px; margin: 0 auto; background: #0079c1; border-radius: 8px; color: #fff; font-family: "Open Sans", sans-serif; font-weight: 600; font-size: 28.300px; line-height: 74px; }

/* thumbnail drawings */
.t-road path { fill: none; stroke-linejoin: round; vector-effect: non-scaling-stroke; }
.t-green { stroke: #14a814; stroke-width: 10; }
.t-green-thin { stroke: #14a814; stroke-width: 5; }
.t-yellow { stroke: #f2e21b; stroke-width: 6; }
.t-orange { stroke: #ea9a1a; stroke-width: 6; }
.t-red { stroke: #c4130f; stroke-width: 6; }
.thumb text, symbol text { font-family: "Liberation Sans", sans-serif; }
.t-town { font-size: 13px; fill: #444; }
.t-tiny { font-size: 7.500px; fill: #666; }
.bus-base { fill: #f2f1ea; }
.bus-purple { fill: #ebe2f0; }
.bus-tint { fill: #e8ebc9; }
.bus-green { fill: #c8e2ac; }
.bus-streets { fill: none; stroke: #dcdcd6; stroke-width: 1; }
.bus-road { fill: none; stroke: #a5a5a5; stroke-width: 2.500; }
.bus-route { fill: none; stroke: #5f4bd0; stroke-width: 1.500; }
.bus-route-2 { fill: none; stroke: #6b3fa8; stroke-width: 2; }
.bus-stop { fill: #1a3cc0; }
.bus-flag { fill: #7a4bb0; }
.bus-pin { fill: #c81e2a; }
.bus-pin-dot { fill: #fff; }
.thumb .bus-town { font-family: "Liberation Serif", serif; font-size: 11px; font-weight: 700; fill: #444; }
.pol-base { fill: #f5f4ef; }
.pol-tan { fill: #eadfcb; }
.pol-grey { fill: #e4e4e4; }
.pol-grey-dark { fill: #d6d6d6; }
.pol-lilac { fill: #ece6ec; }
.pol-lilac-2 { fill: #e9e2ea; }
.pol-white-road { fill: #fff; }
.pol-pink { fill: #ecd6d6; }
.pol-teal { fill: #d6ece8; }
.pol-road { fill: #a8a8a8; }
.pol-mark { fill: #f0d81c; }
.pol-dot { fill: #e0360e; }
.pol-sign { fill: #f0d81c; stroke: #777; stroke-width: 1; }
.pol-ring { fill: none; stroke: #e0494f; stroke-width: 1.200; }
```
